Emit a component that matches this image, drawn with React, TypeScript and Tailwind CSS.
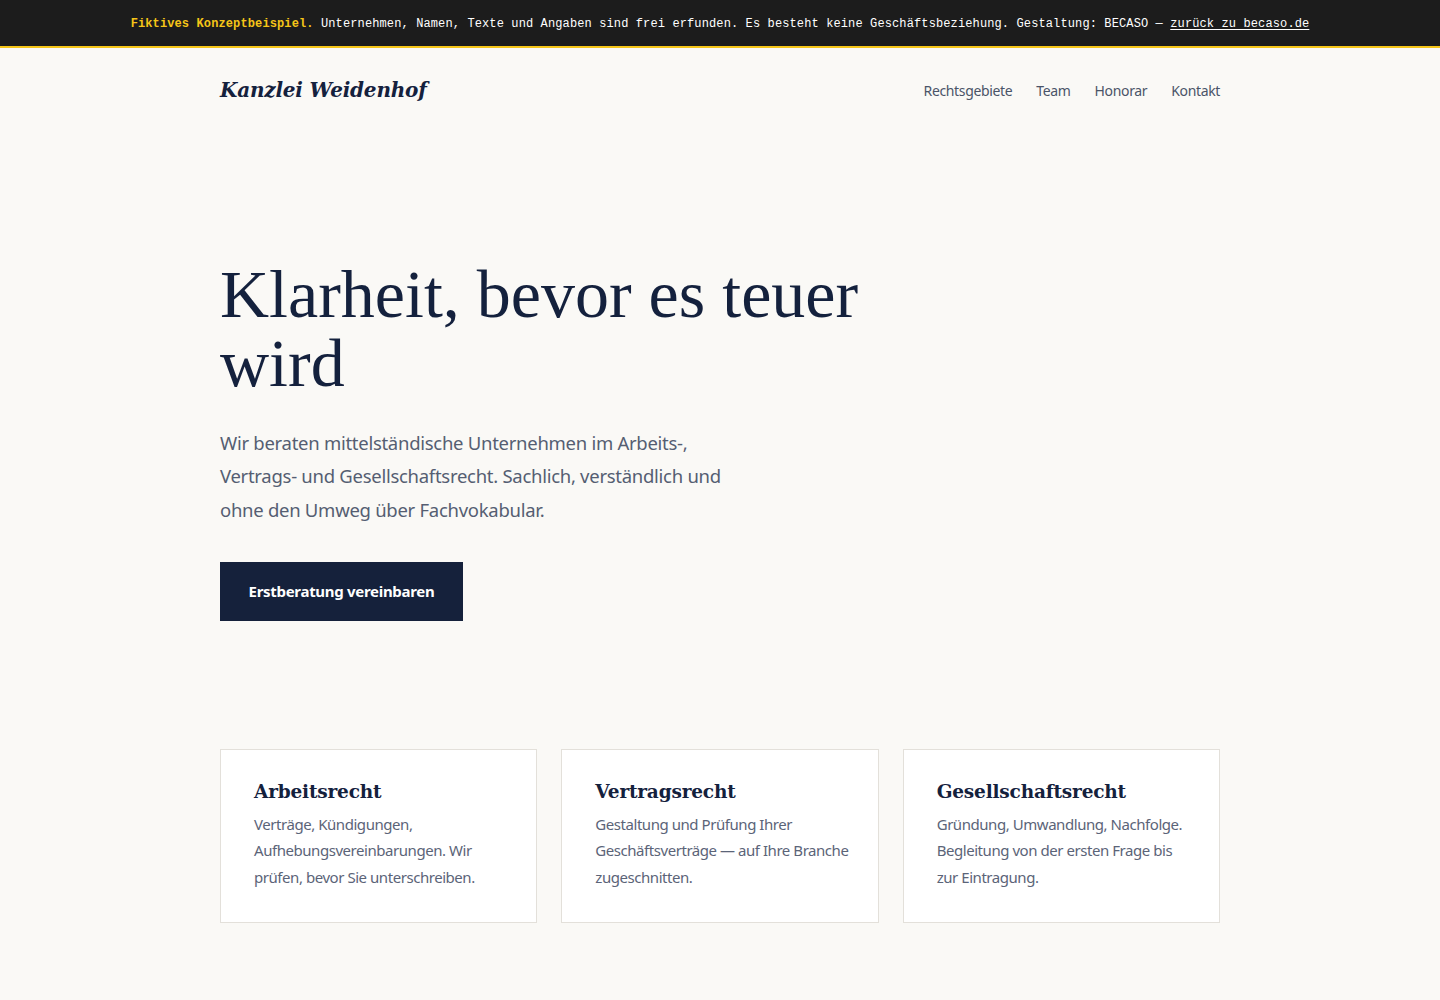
import React from 'react';

const serif = "font-['Georgia','Liberation_Serif',serif]";
const wideSerif = "font-['DejaVu_Serif','Georgia',serif]";
const sans = "font-['Noto_Sans','Open_Sans',sans-serif]";

const areas = [
  {
    title: 'Arbeitsrecht',
    text: 'Verträge, Kündigungen, Aufhebungsvereinbarungen. Wir prüfen, bevor Sie unterschreiben.',
  },
  {
    title: 'Vertragsrecht',
    text: 'Gestaltung und Prüfung Ihrer Geschäftsverträge — auf Ihre Branche zugeschnitten.',
  },
  {
    title: 'Gesellschaftsrecht',
    text: 'Gründung, Umwandlung, Nachfolge. Begleitung von der ersten Frage bis zur Eintragung.',
  },
];

export default function App() {
  return (
    <div className={`min-h-[1000px] bg-[#faf9f6] ${sans}`}>
      {/* notice bar */}
      <div className="flex h-12 items-center justify-center border-b-2 border-[#f5c518] bg-[#1c1c1c] pt-[2px] font-['Liberation_Mono',monospace] text-[12px] tracking-[0.01em] text-white">
        <p>
          <span className="font-bold text-[#f5c518]">Fiktives Konzeptbeispiel.</span> Unternehmen, Namen, Texte und
          Angaben sind frei erfunden. Es besteht keine Geschäftsbeziehung. Gestaltung: BECASO —{' '}
          <a href="#" className="underline underline-offset-2">
            zurück zu becaso.de
          </a>
        </p>
      </div>

      <div className="mx-auto max-w-[1000px]">
        <header className="flex h-[84px] items-center justify-between">
          <a href="#" className={`${wideSerif} text-[20px] font-bold italic tracking-[-0.01em] text-[#14213d]`}>
            Kanzlei Weidenhof
          </a>
          <nav className="flex gap-6 text-[14px] tracking-[-0.025em] text-[#4a5468]">
            <a href="#">Rechtsgebiete</a>
            <a href="#">Team</a>
            <a href="#">Honorar</a>
            <a href="#">Kontakt</a>
          </nav>
        </header>

        <section className="pt-[128px]">
          <h1 className={`${serif} max-w-[700px] text-[68px] leading-[69px] text-[#14213d]`}>
            Klarheit, bevor es teuer wird
          </h1>
          <p className="mt-[28px] max-w-[520px] text-[18.5px] leading-[1.8] tracking-[-0.015em] text-[#555e72]">
            Wir beraten mittelständische Unternehmen im Arbeits-, Vertrags- und Gesellschaftsrecht. Sachlich,
            verständlich und ohne den Umweg über Fachvokabular.
          </p>
          <a
            href="#"
            className="mt-[36px] inline-flex h-[59px] w-[243px] items-center justify-center bg-[#15213b] text-[15px] font-bold tracking-[-0.02em] text-white"
          >
            Erstberatung vereinbaren
          </a>
        </section>

        <section className="mt-[128px] grid grid-cols-3 gap-6">
          {areas.map((a) => (
            <div key={a.title} className="border border-[#e3e0da] bg-white pl-[33px] pr-[26px] pt-[28px] pb-[32px]">
              <h3 className={`${wideSerif} text-[18.5px] font-bold tracking-[-0.01em] text-[#14213d]`}>{a.title}</h3>
              <p className="mt-[5px] text-[15px] leading-[26.5px] tracking-[-0.03em] text-[#5b6478]">{a.text}</p>
            </div>
          ))}
        </section>
      </div>
    </div>
  );
}
